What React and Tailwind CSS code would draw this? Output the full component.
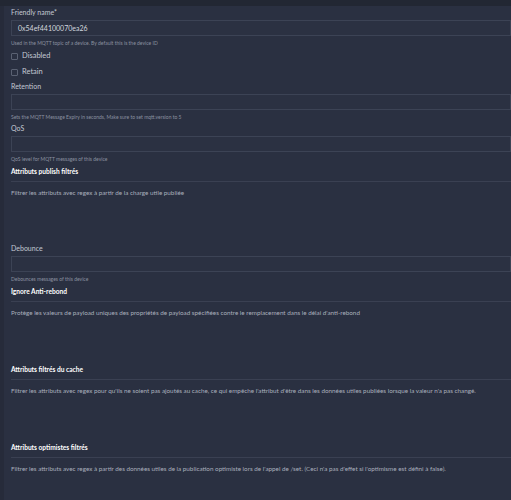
import React from 'react';

const font = { fontFamily: 'Lato, "Noto Sans", sans-serif' };

const Field = ({ label, value, help }) => (
  <div className="flex flex-col">
    <div className="h-[13px] text-[7px] leading-[13px] text-[#c3c8d2]">{label}</div>
    <div className="mt-[1px] h-[16px] border border-[#3c4355] bg-[#2b3142] pl-[6px] text-[7px] leading-[14px] text-[#d3d7df]">
      {value}
    </div>
    <div className="mt-[3px] h-[9px] text-[5px] leading-[9px] text-[#8a91a0]">{help}</div>
  </div>
);

const Check = ({ label }) => (
  <div className="flex h-[16px] items-center gap-[4px]">
    <div className="h-[7px] w-[7px] rounded-[1px] border border-[#5a6172]" />
    <span className="text-[7.5px] text-[#c3c8d2]">{label}</span>
  </div>
);

const Section = ({ title, text, height }) => (
  <div className="flex flex-col" style={{ height }}>
    <div className="h-[14px] text-[6.6px] font-bold leading-[14px] text-white">{title}</div>
    <div className="mr-[-11px] mt-[3px] border-t border-[#3a4052]" />
    <div className="mt-[6px] text-[6.3px] leading-[10px] text-[#a9afbc]">{text}</div>
  </div>
);

export default function App() {
  return (
    <div className="h-[500px] w-[511px] overflow-hidden bg-[#2a3041]" style={font}>
      <div className="h-[6px] bg-[#222733]" />
      <div className="flex h-[494px] border-l-[4px] border-[#262b3a]">
        <div className="flex w-full flex-col pl-[7px]">
          <Field label="Friendly name*" value="0x54ef44100070ea26" help="Used in the MQTT topic of a device. By default this is the device ID" />
          <Check label="Disabled" />
          <Check label="Retain" />
          <Field label="Retention" value="" help="Sets the MQTT Message Expiry in seconds, Make sure to set mqtt.version to 5" />
          <Field label="QoS" value="" help="QoS level for MQTT messages of this device" />
          <Section title="Attributs publish filtrés" text="Filtrer les attributs avec regex à partir de la charge utile publiée" height="78px" />
          <Field label="Debounce" value="" help="Debounces messages of this device" />
          <Section title="Ignore Anti-rebond" text="Protège les valeurs de payload uniques des propriétés de payload spécifiées contre le remplacement dans le délai d'anti-rebond" height="78px" />
          <Section title="Attributs filtrés du cache" text="Filtrer les attributs avec regex pour qu'ils ne soient pas ajoutés au cache, ce qui empêche l'attribut d'être dans les données utiles publiées lorsque la valeur n'a pas changé." height="78px" />
          <Section title="Attributs optimistes filtrés" text="Filtrer les attributs avec regex à partir des données utiles de la publication optimiste lors de l'appel de /set. (Ceci n'a pas d'effet si l'optimisme est défini à false)." height="50px" />
        </div>
      </div>
    </div>
  );
}
